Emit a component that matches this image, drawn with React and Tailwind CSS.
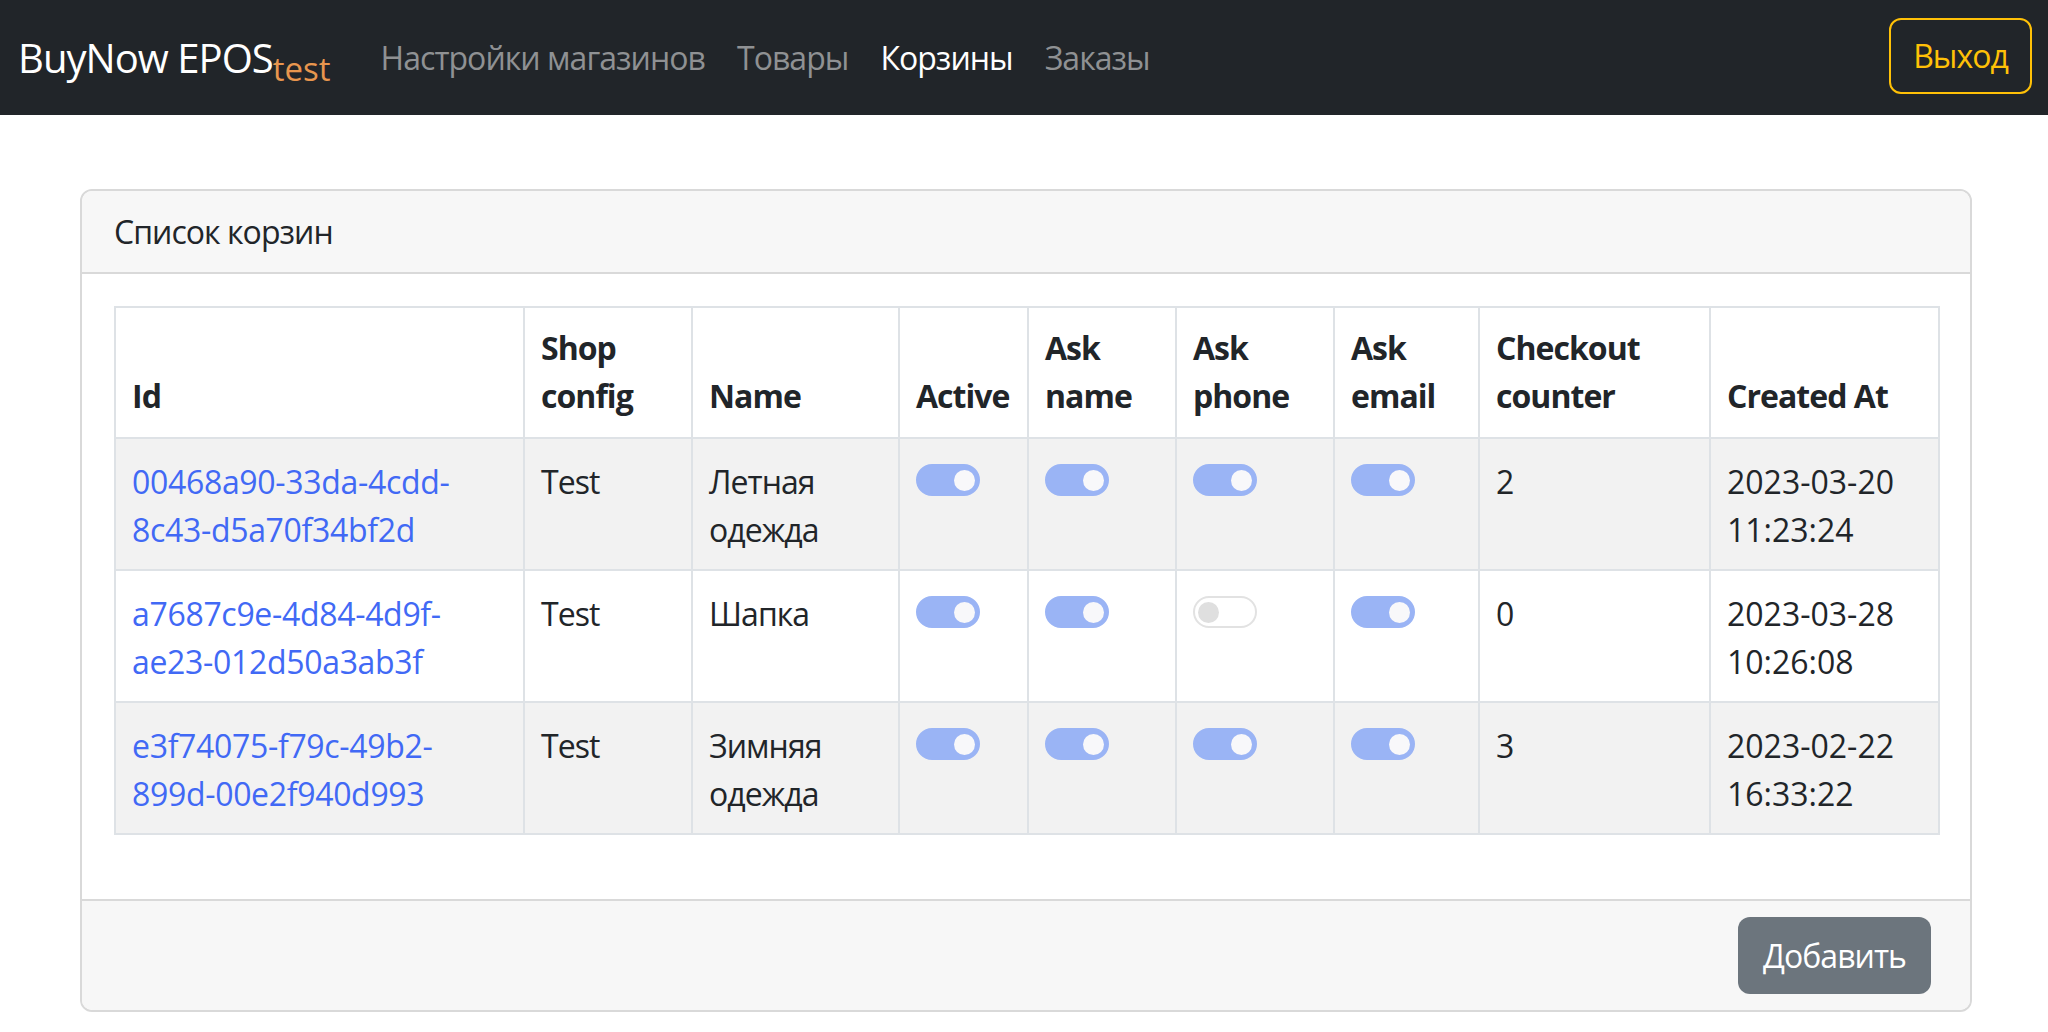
import React from 'react';

const carts = [
  {
    id: '00468a90-33da-4cdd-8c43-d5a70f34bf2d',
    shop: 'Test',
    name: 'Летная одежда',
    active: true,
    askName: true,
    askPhone: true,
    askEmail: true,
    counter: 2,
    created: '2023-03-20 11:23:24'
  },
  {
    id: 'a7687c9e-4d84-4d9f-ae23-012d50a3ab3f',
    shop: 'Test',
    name: 'Шапка',
    active: true,
    askName: true,
    askPhone: false,
    askEmail: true,
    counter: 0,
    created: '2023-03-28 10:26:08'
  },
  {
    id: 'e3f74075-f79c-49b2-899d-00e2f940d993',
    shop: 'Test',
    name: 'Зимняя одежда',
    active: true,
    askName: true,
    askPhone: true,
    askEmail: true,
    counter: 3,
    created: '2023-02-22 16:33:22'
  }
];

const columns = [
  { title: 'Id', width: 'w-[409px]' },
  { title: 'Shop config', width: 'w-[168px]' },
  { title: 'Name', width: 'w-[207px]' },
  { title: 'Active', width: 'w-[129px]' },
  { title: 'Ask name', width: 'w-[148px]' },
  { title: 'Ask phone', width: 'w-[158px]' },
  { title: 'Ask email', width: 'w-[145px]' },
  { title: 'Checkout counter', width: 'w-[231px]' },
  { title: 'Created At', width: 'w-[229px]' }
];

const cell = 'border-2 border-[#dee2e6] px-[16px] pt-[19px] pb-[15px] align-top';

// disabled bootstrap-like switch
const Switch = ({ on }) => (
  <div className="pt-[6px]">
    {on ? (
      <div className="w-[64px] h-[32px] rounded-full bg-[#9ab4f5] border-2 border-[#9ab4f5] flex items-center justify-end px-[3px]">
        <div className="w-[21px] h-[21px] rounded-full bg-[#f8f8fa]" />
      </div>
    ) : (
      <div className="w-[64px] h-[32px] rounded-full bg-white border-2 border-[#e2e2e2] flex items-center justify-start px-[3px]">
        <div className="w-[21px] h-[21px] rounded-full bg-[#dfdfdf]" />
      </div>
    )}
  </div>
);

const App = () => {
  return (
    <div
      className="min-h-screen bg-white text-[#212529] text-[32px] leading-[48px] tracking-[-0.03em]"
      style={{ fontFamily: '"Open Sans", "Noto Sans", sans-serif' }}
    >
      {/* Navbar */}
      <nav className="h-[115px] bg-[#212529] flex items-center px-4">
        <a className="text-white text-[40px] leading-[60px] mr-[34px] pl-[2px] whitespace-nowrap">
          BuyNow EPOS
          <sub className="relative -bottom-[0.25em] text-[33px] leading-none align-baseline tracking-normal text-[#e8964e]">test</sub>
        </a>
        <div className="flex items-center">
          <a className="px-[16px] text-[#8f9193]">Настройки магазинов</a>
          <a className="px-[16px] text-[#8f9193]">Товары</a>
          <a className="px-[16px] text-white">Корзины</a>
          <a className="px-[16px] text-[#8f9193]">Заказы</a>
        </div>
        <button className="ml-auto mb-[3px] h-[76px] px-[22px] border-2 border-[#ffc107] rounded-[12px] text-[#ffc107]">
          Выход
        </button>
      </nav>

      {/* Content */}
      <div className="ml-[80px] mr-[76px] mt-[74px]">
        <div className="border-2 border-[#d9d9d9] rounded-[12px] overflow-hidden">
          <div className="bg-[#f7f7f7] border-b-2 border-[#d9d9d9] px-[32px] pt-[17px] pb-[16px]">
            Список корзин
          </div>

          <div className="px-[32px] pt-[32px] pb-[32px]">
            <table className="w-full table-fixed border-collapse mb-[32px]">
              <colgroup>
                {columns.map((c) => (
                  <col key={c.title} className={c.width} />
                ))}
              </colgroup>
              <thead>
                <tr>
                  {columns.map((c) => (
                    <th
                      key={c.title}
                      className="border-2 border-[#dee2e6] px-[16px] pt-[16px] pb-[17px] text-left align-bottom font-bold"
                    >
                      {c.title}
                    </th>
                  ))}
                </tr>
              </thead>
              <tbody>
                {carts.map((cart, i) => (
                  <tr key={cart.id} className={i % 2 === 0 ? 'bg-[#f2f2f2]' : 'bg-white'}>
                    <td className={cell}>
                      <a className="text-[#4169f5] tracking-[-0.01em]">{cart.id}</a>
                    </td>
                    <td className={cell}>{cart.shop}</td>
                    <td className={cell}>{cart.name}</td>
                    <td className={cell}>
                      <Switch on={cart.active} />
                    </td>
                    <td className={cell}>
                      <Switch on={cart.askName} />
                    </td>
                    <td className={cell}>
                      <Switch on={cart.askPhone} />
                    </td>
                    <td className={cell}>
                      <Switch on={cart.askEmail} />
                    </td>
                    <td className={`${cell} tracking-normal`}>{cart.counter}</td>
                    <td className={`${cell} tracking-normal`}>{cart.created}</td>
                  </tr>
                ))}
              </tbody>
            </table>
          </div>

          <div className="bg-[#f7f7f7] border-t-2 border-[#d9d9d9] px-[32px] py-[16px] flex justify-end">
            <button className="mr-[7px] h-[77px] px-[25px] rounded-[12px] bg-[#6c757d] text-white">
              Добавить
            </button>
          </div>
        </div>
      </div>
    </div>
  );
};

export default App;
